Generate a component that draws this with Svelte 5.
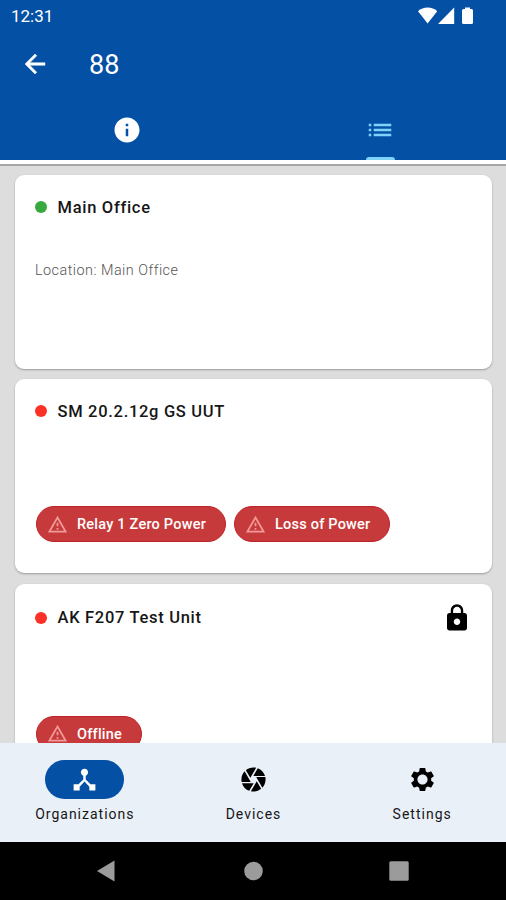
<script>
   const cards = [
      { title: "Main Office", online: true, location: "Main Office", locked: false, alarms: [] },
      { title: "SM 20.2.12g GS UUT", online: false, locked: false, alarms: ["Relay 1 Zero Power", "Loss of Power"] },
      { title: "AK F207 Test Unit", online: false, locked: true, alarms: ["Offline"] },
   ];

   // Material icon outlines, 24x24
   const icons = {
      back: "M20 11H7.83l5.59-5.59L12 4l-8 8 8 8 1.41-1.41L7.83 13H20v-2z",
      info: "M12 2C6.48 2 2 6.48 2 12s4.48 10 10 10 10-4.48 10-10S17.52 2 12 2zm1 15h-2v-6h2v6zm0-8h-2V7h2v2z",
      list: "M3 13h2v-2H3v2zm0 4h2v-2H3v2zm0-8h2V7H3v2zm4 4h14v-2H7v2zm0 4h14v-2H7v2zM7 7v2h14V7H7z",
      warning: "M12 5.99L19.53 19H4.47L12 5.99M12 2L1 21h22L12 2zm1 14h-2v2h2v-2zm0-6h-2v4h2v-4z",
      lock: "M18 8h-1V6c0-2.76-2.24-5-5-5S7 3.24 7 6v2H6c-1.1 0-2 .9-2 2v10c0 1.1.9 2 2 2h12c1.1 0 2-.9 2-2V10c0-1.1-.9-2-2-2zm-6 9.6c-1.44 0-2.6-1.16-2.6-2.6s1.16-2.6 2.6-2.6 2.6 1.16 2.6 2.6-1.16 2.6-2.6 2.6zm3.1-9.6H8.9V6c0-1.71 1.39-3.1 3.1-3.1 1.71 0 3.1 1.39 3.1 3.1v2z",
      hub: "M17 16l-4-4V8.82C14.16 8.4 15 7.3 15 6c0-1.66-1.34-3-3-3S9 4.34 9 6c0 1.3.84 2.4 2 2.82V12l-4 4H3v5h5v-3.05l4-4.2 4 4.2V21h5v-5h-4z",
      camera: "M9.4 10.5l4.77-8.26C13.47 2.09 12.75 2 12 2c-2.4 0-4.6.85-6.32 2.25l3.66 6.35.06-.1zM21.54 9c-.92-2.92-3.15-5.26-6-6.34L11.88 9h9.66zm.26 1h-7.49l.29.5 4.76 8.25C20.99 16.97 22 14.61 22 12c0-.69-.07-1.35-.2-2zM8.54 12l-3.9-6.75C3.01 7.03 2 9.39 2 12c0 .69.07 1.35.2 2h7.49l-1.15-2zm-6.08 3c.92 2.92 3.15 5.26 6 6.34L12.12 15H2.46zm11.27 0l-3.9 6.76c.7.15 1.42.24 2.17.24 2.4 0 4.6-.85 6.32-2.25l-3.66-6.35-.93 1.6z",
      settings: "M19.14 12.94c.04-.3.06-.61.06-.94 0-.32-.02-.64-.07-.94l2.03-1.58c.18-.14.23-.41.12-.61l-1.92-3.32c-.12-.22-.37-.29-.59-.22l-2.39.96c-.5-.38-1.03-.7-1.62-.94l-.36-2.54c-.04-.24-.24-.41-.48-.41h-3.84c-.24 0-.43.17-.47.41l-.36 2.54c-.59.24-1.13.57-1.62.94l-2.39-.96c-.22-.08-.47 0-.59.22L2.74 8.87c-.12.21-.08.47.12.61l2.03 1.58c-.05.3-.09.63-.09.94s.02.64.07.94l-2.03 1.58c-.18.14-.23.41-.12.61l1.92 3.32c.12.22.37.29.59.22l2.39-.96c.5.38 1.03.7 1.62.94l.36 2.54c.05.24.24.41.48.41h3.84c.24 0 .44-.17.47-.41l.36-2.54c.59-.24 1.13-.56 1.62-.94l2.39.96c.22.08.47 0 .59-.22l1.92-3.32c.12-.22.07-.47-.12-.61l-2.01-1.58zM12 16.2c-2.32 0-4.2-1.88-4.2-4.2s1.88-4.2 4.2-4.2 4.2 1.88 4.2 4.2-1.88 4.2-4.2 4.2z",
   };

   const navItems = [
      { label: "Organizations", icon: "hub" },
      { label: "Devices", icon: "camera" },
      { label: "Settings", icon: "settings" },
   ];

   let tab = $state("list");
   let currentNav = $state("Organizations");
</script>

{#snippet icon(name, size)}
   <svg width={size} height={size} viewBox="0 0 24 24" fill="currentColor" aria-hidden="true">
      <path d={icons[name]} />
   </svg>
{/snippet}

<div class="screen">
   <header>
      <div class="statusBar">
         <span>12:31</span>
         <svg width="56" height="18" viewBox="0 0 56 18" fill="#fff" aria-hidden="true">
            <path d="M0 4.2C5-.6 14.3-.6 19.2 4.2L9.6 16.5z" />
            <path d="M20 17L36.2 .5V17z" />
            <path d="M47 .5h5v1.5h1.5q1.5 0 1.5 1.500v12q0 1.5-1.5 1.5h-8q-1.5 0-1.5-1.5v-12q0-1.5 1.5-1.5H47z" />
         </svg>
      </div>

      <div class="appBar">
         <button class="back" aria-label="Back">{@render icon("back", 30)}</button>
         <h1>88</h1>
      </div>

      <div class="tabs">
         <button class="tab" class:active={ tab == "info" } aria-label="Info" onclick={ () => tab = "info" }>
            {@render icon("info", 30)}
         </button>
         <button class="tab" class:active={ tab == "list" } aria-label="List" onclick={ () => tab = "list" }>
            {@render icon("list", 30)}
         </button>
      </div>
   </header>

   <main>
      {#each cards as card (card.title)}
         <article class="card" class:locked={ card.locked }>
            <div class="cardHead">
               <span class="dot" class:online={ card.online }></span>
               <h2>{card.title}</h2>
               {#if card.locked}
                  <span class="lock">{@render icon("lock", 30)}</span>
               {/if}
            </div>

            {#if card.location}
               <p>Location: {card.location}</p>
            {/if}

            {#if card.alarms.length > 0}
               <div class="chips">
                  {#each card.alarms as alarm (alarm)}
                     <span class="chip">{@render icon("warning", 21)}<span class="chipText">{alarm}</span></span>
                  {/each}
               </div>
            {/if}
         </article>
      {/each}
   </main>

   <nav>
      {#each navItems as item (item.label)}
         <button class="navItem" class:current={ currentNav == item.label } onclick={ () => currentNav = item.label }>
            <span class="pill">{@render icon(item.icon, 29)}</span>
            <span class="navLabel">{item.label}</span>
         </button>
      {/each}
   </nav>

   <!-- android system buttons -->
   <footer>
      <svg width="20" height="22" viewBox="0 0 20 22" aria-hidden="true"><path d="M1 11L18.5 .5v21z" /></svg>
      <svg width="20" height="20" viewBox="0 0 20 20" aria-hidden="true"><circle cx="10.5" cy="10" r="9.3" /></svg>
      <svg width="20" height="20" viewBox="0 0 20 20" aria-hidden="true"><rect x=".3" y=".3" width="19.4" height="19.4" rx="1.5" /></svg>
   </footer>
</div>

<style>
   :global(body) {
      margin: 0;
   }

   .screen {
      display: flex;
      flex-direction: column;
      width: 506px;
      height: 900px;
      overflow: hidden;
      font-family: Roboto, "Liberation Sans", sans-serif;
      background: #ddd;
   }

   button {
      border: 0;
      padding: 0;
      background: none;
      color: inherit;
      font: inherit;
      cursor: pointer;
   }

   svg {
      display: block;
      flex: none;
   }

   h1, h2, p {
      margin: 0;
   }

   header {
      flex: none;
      box-sizing: border-box;
      height: 166px;
      background: #0450a4;
      color: #fff;
      border-bottom: 2px solid #a5a5a5;
   }

   .statusBar {
      display: flex;
      justify-content: space-between;
      align-items: center;
      height: 32px;
      padding: 0 32px 0 11px;
      font-size: 17px;
   }

   .appBar {
      display: flex;
      align-items: center;
      height: 64px;
      padding-left: 20px;
   }

   .back svg {
      stroke: currentColor;
      stroke-width: .4;
   }

   h1 {
      margin-left: 39px;
      padding-top: 2px;
      font-size: 27px;
      font-weight: 400;
      line-height: 62px;
   }

   .tabs {
      display: flex;
      height: 64px;
      padding-left: 1px;
      border-bottom: 4px solid #fff;
   }

   .tab {
      flex: 1;
      display: grid;
      grid-template-rows: 1fr 3px;
      justify-items: center;
      align-items: center;
      padding-top: 7px;
   }

   .active {
      padding-left: 1px;
      color: #7fd3fa;
   }

   .active::after {
      content: "";
      width: 29px;
      height: 3px;
      border-radius: 3px 3px 0 0;
      background: #7fd3fa;
   }

   main {
      flex: 1;
      min-height: 0;
      overflow: hidden;
      padding: 9px 14.5px 0 15px;
   }

   .card {
      display: flex;
      flex-direction: column;
      box-sizing: border-box;
      height: 194px;
      margin-bottom: 10.4px;
      padding: 20px 20px 31px;
      border-radius: 9px;
      background: #fff;
      box-shadow: 0 1px 2px rgba(0, 0, 0, .3);
   }

   .cardHead {
      display: flex;
      align-items: center;
      height: 24px;
   }

   .dot {
      width: 12px;
      height: 12px;
      margin-right: 10.5px;
      border-radius: 50%;
      background: #fb3127;
   }

   .dot.online {
      background: #37a93e;
   }

   h2 {
      font-size: 16.5px;
      font-weight: 500;
      letter-spacing: .7px;
      color: #161616;
   }

   .lock {
      margin-left: auto;
      color: #000;
   }

   p {
      margin-top: 42px;
      font-size: 14.4px;
      font-weight: 300;
      line-height: 20px;
      letter-spacing: .48px;
      color: #555;
   }

   .chips {
      display: flex;
      gap: 8px;
      margin-top: auto;
      padding-left: 1px;
   }

   .chip {
      display: flex;
      align-items: center;
      gap: 9px;
      box-sizing: border-box;
      height: 36px;
      padding: 0 19px 0 10px;
      border: 1px solid #c02027;
      border-radius: 18px;
      background: #c73a3c;
      color: #fff;
      font-size: 14.5px;
      font-weight: 500;
      letter-spacing: .22px;
   }

   .chipText {
      padding-top: 1px;
   }

   .chip svg {
      color: #f29a9a;
   }

   .locked {
      height: 199px;
   }

   .locked .cardHead {
      height: 28px;
   }

   nav {
      flex: none;
      display: flex;
      height: 99px;
      background: #eaf0f8;
   }

   .navItem {
      flex: 1;
      display: flex;
      flex-direction: column;
      align-items: center;
      padding: 17px 0 0 1px;
      color: #000;
   }

   .pill {
      display: grid;
      place-items: center;
      width: 79px;
      height: 39px;
      border-radius: 20px;
   }

   .current .pill {
      background: #0450a4;
      color: #fff;
   }

   .navLabel {
      margin-top: 6px;
      font-size: 14px;
      line-height: 18px;
      letter-spacing: 1px;
      color: #161616;
   }

   footer {
      flex: none;
      display: flex;
      justify-content: space-between;
      align-items: center;
      height: 58px;
      padding: 0 97px 0 96px;
      box-sizing: border-box;
      background: #000;
      fill: #9b9b9b;
   }
</style>
